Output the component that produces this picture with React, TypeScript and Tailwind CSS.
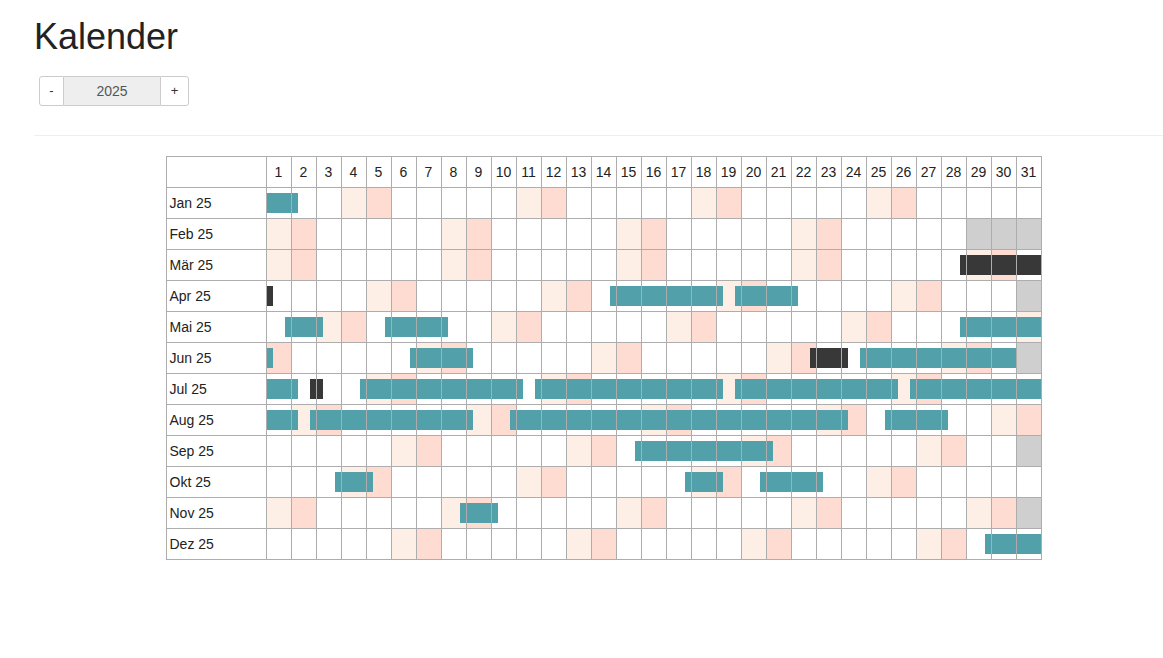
import React from "react";

type Bar = [number | null, number | null, "t" | "d"];

const MONTHS = ["Jan", "Feb", "Mär", "Apr", "Mai", "Jun", "Jul", "Aug", "Sep", "Okt", "Nov", "Dez"];

const BARS: Record<number, Bar[]> = {
  0: [[null, 2, "t"]],
  2: [[28, null, "d"]],
  3: [[null, 1, "d"], [14, 19, "t"], [19, 22, "t"]],
  4: [[1, 3, "t"], [5, 8, "t"], [28, null, "t"]],
  5: [[null, 1, "t"], [6, 9, "t"], [22, 24, "d"], [24, null, "t"]],
  6: [[null, 2, "t"], [2, 3, "d"], [4, 11, "t"], [11, 19, "t"], [19, 26, "t"], [26, null, "t"]],
  7: [[null, 2, "t"], [2, 9, "t"], [10, 24, "t"], [25, 28, "t"]],
  8: [[15, 21, "t"]],
  9: [[3, 5, "t"], [17, 19, "t"], [20, 23, "t"]],
  10: [[8, 10, "t"]],
  11: [[29, null, "t"]],
};

const DAYS = Array.from({ length: 31 }, (_, i) => i + 1);

function daysIn(m: number) {
  return new Date(2025, m + 1, 0).getDate();
}

function cellClass(m: number, d: number) {
  if (d > daysIn(m)) return "bg-[#cfcfcf]";
  const wd = new Date(2025, m, d).getDay();
  if (wd === 6) return "bg-[#fdeee6]";
  if (wd === 0) return "bg-[#fedcd1]";
  return "bg-white";
}

function MonthRow({ m }: { m: number }) {
  const n = daysIn(m);
  const bars = BARS[m] || [];
  return (
    <div className="flex h-[31px] border-b border-[#adadad]">
      <div className="w-[100px] shrink-0 border-r border-[#adadad] pl-[3px] flex items-center text-[14px] text-[#222]">
        {MONTHS[m]} 25
      </div>
      <div className="relative flex">
        {DAYS.map((d) => (
          <div key={d} className={`w-[25px] h-full shrink-0 border-r border-[#adadad] ${cellClass(m, d)}`} />
        ))}
        {bars.map(([s, e, c], i) => {
          const left = s === null ? 0 : (s - 1) * 25 + 18;
          const right = e === null ? n * 25 : (e - 1) * 25 + 6;
          return (
            <div
              key={i}
              className={`absolute top-[5px] h-[20px] ${c === "t" ? "bg-[#52a0aa]" : "bg-[#383838]"}`}
              style={{ left, width: right - left }}
            />
          );
        })}
        <div className="absolute inset-0 flex pointer-events-none">
          {DAYS.map((d) => (
            <div key={d} className="w-[25px] h-full shrink-0 border-r border-[#adadad]" />
          ))}
        </div>
      </div>
    </div>
  );
}

export default function App() {
  return (
    <div className="w-full overflow-hidden bg-white min-h-[658px] font-['Liberation_Sans',Arial,sans-serif] text-[#333]">
      <div className="ml-[34px] w-[1139px]">
        <h1 className="pt-[17px] text-[36px] leading-[40px] text-[#222]">Kalender</h1>
        <div className="mt-[19px] ml-[5px] flex h-[30px] w-[150px] text-[14px]">
          <div className="w-[25px] flex items-center justify-center border border-[#ccc] rounded-l-[3px] bg-white text-[#333] text-[13px]">
            -
          </div>
          <div className="w-[96px] flex items-center justify-center border-y border-[#ccc] bg-[#eee] text-[#555]">
            2025
          </div>
          <div className="w-[29px] flex items-center justify-center border border-[#ccc] rounded-r-[3px] bg-white text-[#333] text-[13px]">
            +
          </div>
        </div>
        <div className="mt-[29px] h-px bg-[#eee]" />
        <div className="mt-[20px] mx-auto w-[876px] border-t border-l border-[#adadad]">
          <div className="flex h-[31px] border-b border-[#adadad]">
            <div className="w-[100px] shrink-0 border-r border-[#adadad]" />
            {DAYS.map((d) => (
              <div
                key={d}
                className="w-[25px] shrink-0 border-r border-[#adadad] flex items-center justify-center text-[14px] text-[#222]"
              >
                {d}
              </div>
            ))}
          </div>
          {MONTHS.map((_, m) => (
            <MonthRow key={m} m={m} />
          ))}
        </div>
      </div>
    </div>
  );
}
